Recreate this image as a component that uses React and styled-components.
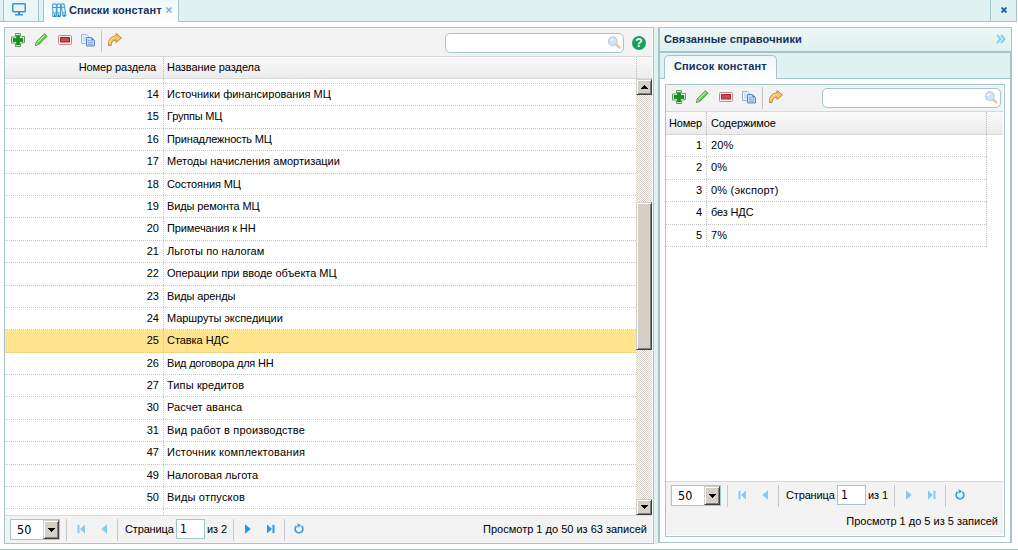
import React from "react";
import styled, { createGlobalStyle, css } from "styled-components";

const LINE = "#a6c5ca";
const DOT = "#c6c6c6";

const GlobalStyle = createGlobalStyle`
  * { box-sizing: border-box; }
  body { margin: 0; background: #fff; overflow: hidden; }
  body, input { font-family: "Liberation Sans", Arial, sans-serif; font-size: 11px; color: #000; }
`;

const Page = styled.div`
  width: 1018px; height: 550px; display: flex; flex-direction: column;
  border-bottom: 1px solid ${LINE};
`;
const TabBar = styled.div`
  width: 1017px; height: 22px; display: flex; background: #dff1f0; padding-left: 3px;
  border-right: 1px solid ${LINE}; box-shadow: inset 0 -1px ${LINE};
`;
const WindowTab = styled.div`
  width: ${(p) => p.$width}px; height: ${(p) => (p.$active ? 22 : 21)}px; display: flex; align-items: center;
  margin-right: ${(p) => (p.$active ? 0 : 4)}px; padding: 0 6px 2px 8px;
  border: 1px solid ${LINE}; border-width: 0 1px;
  background: ${(p) => (p.$active ? "linear-gradient(#eef8f8, #fff)" : "#e9f6f5")};
`;
const TabTitle = styled.b`
  color: #15305f; letter-spacing: ${(p) => p.$ls || 0}px; margin-left: ${(p) => p.$indent || 0}px;
  white-space: nowrap; line-height: 14px;
`;
const TabClose = styled.span`display: flex; margin-left: 4px;`;
const CloseAll = styled.div`
  margin-left: auto; width: 26px; height: 21px; border-left: 1px solid ${LINE};
  display: flex; align-items: center; justify-content: center; padding-bottom: 1px;
`;
const Workspace = styled.div`display: flex; height: 517px; margin: 5px 0 0 4px;`;

const GridPanel = styled.section`
  width: ${(p) => p.$width}px; height: ${(p) => p.$height}px; display: flex; flex-direction: column;
  border: 1px solid ${LINE}; padding-right: 1px; background: #fff;
  ${(p) => p.$inset && css`margin: 5px 0 0 5px; padding-bottom: 1px;`}
`;
const Splitter = styled.div`width: 4px; background: #e0f3f1;`;
const Toolbar = styled.div`
  height: ${(p) => p.$height}px; display: flex; align-items: flex-start; background: #f3f3f3;
  padding: ${(p) => p.$top}px ${(p) => p.$right}px 0 5px; border-bottom: 1px solid #d9d9d9;
`;
const ToolButton = styled.span`width: 16px; height: 16px; margin-right: 7.3px; display: flex; svg { display: block; }`;
const ToolDivider = styled.span`width: 1px; height: 22px; margin: -2px 5px 0 -2px; background: #c4c4c4;`;
const SearchBox = styled.label`
  margin: ${(p) => p.$top}px 0 0 auto; width: 179px; height: 20px; padding: 0 2px 0 4px; display: flex; align-items: center;
  border: 1px solid ${LINE}; border-radius: 5px; background: #fff;
`;
const SearchInput = styled.input`flex: 1; min-width: 0; border: 0; outline: 0; background: none;`;
const HelpButton = styled.span`
  width: 14px; height: 14px; margin: 4px 1px 0 8px; border-radius: 50%; background: #1c9f58;
  color: #fff; font: bold 12px/14px "Liberation Sans", sans-serif; text-align: center;
`;
const HeaderRow = styled.div`
  height: ${(p) => p.$height}px; display: flex; align-items: stretch; border-bottom: 1px solid #d9d9d9;
  background: linear-gradient(#fafafa, #ececec); line-height: ${(p) => p.$height - 1}px;
`;
const HeaderCell = styled.div`
  width: ${(p) => p.$width}px; padding: 0 ${(p) => p.$pad || 3}px; border-right: 1px dotted #bbb;
  text-align: ${(p) => (p.$right ? "right" : "left")}; white-space: nowrap; letter-spacing: ${(p) => p.$ls || 0}px;
`;
const GridBody = styled.div`flex: 1; min-height: 0; display: flex; overflow: hidden;`;
const Rows = styled.div`width: ${(p) => p.$width}px;`;
const Row = styled.div`
  height: ${(p) => p.$height || 22.4}px; display: flex; border-bottom: 1px dotted ${DOT};
  background: ${(p) => (p.$selected ? "#ffe48d" : "transparent")};
`;
const Cell = styled.div`
  width: ${(p) => p.$width}px; padding: 0 ${(p) => (p.$right ? 4 : 3)}px; line-height: 21px; white-space: nowrap;
  border-right: ${(p) => (p.$line ? `1px dotted ${DOT}` : "0")};
  text-align: ${(p) => (p.$right ? "right" : "left")}; letter-spacing: ${(p) => p.$ls || 0}px;
`;
const ValueCell = styled(Cell)`padding-left: 4px;`;
const ScrollTrack = styled.div`
  width: 16px; display: flex; flex-direction: column;
  background: repeating-conic-gradient(#d4d0c8 0 25%, #fff 0 50%) 0 0 / 2px 2px;
`;
const raised = css`
  background: #d4d0c8; border: 1px solid; border-color: #d4d0c8 #404040 #404040 #d4d0c8;
  box-shadow: inset 1px 1px #fff, inset -1px -1px #808080;
`;
const ScrollArrow = styled.div`
  height: 16px; flex: none; display: flex; align-items: center; justify-content: center; ${raised}
  ${(p) => p.$end && css`margin-top: auto;`}
`;
const ScrollThumb = styled.div`height: 148px; margin-top: 107px; ${raised}`;
const Footer = styled.div`
  height: ${(p) => p.$height}px; display: flex; align-items: flex-start; padding: 3px 5px 0;
  background: #f3f3f3; border-top: 1px solid #d9d9d9; flex-wrap: ${(p) => (p.$wrap ? "wrap" : "nowrap")};
  line-height: 20px; white-space: nowrap;
`;
const Select = styled.div`
  width: 50px; height: 21px; display: flex; justify-content: space-between; border: 1px solid ${LINE}; background: #fff;
  padding-left: 6px; font: 12.500px/19px "DejaVu Sans Condensed", "DejaVu Sans", sans-serif;
`;
const SelectArrow = styled.span`width: 16px; height: 19px; display: flex; align-items: center; justify-content: center; ${raised}`;
const PagerDivider = styled.span`width: 1px; height: 22px; background: #c9c9c9; margin: 0 ${(p) => p.$after}px 0 ${(p) => p.$before}px;`;
const PagerButton = styled.span`width: 16px; height: 20px; display: flex; align-items: center; justify-content: center; margin-right: ${(p) => p.$gap || 0}px;`;
const PageInput = styled.input`
  width: 29px; height: 20px; margin: 0 2px; padding: 0 3px; border: 1px solid ${LINE}; outline: 0;
  font: 12px "DejaVu Sans Condensed", "DejaVu Sans", sans-serif;
`;
const FooterText = styled.span`
  letter-spacing: ${(p) => p.$ls || 0}px; width: ${(p) => (p.$width ? `${p.$width}px` : "auto")};
`;
const Summary = styled.span`margin-left: auto; letter-spacing: ${(p) => p.$ls || 0}px;`;

const SidePanel = styled.section`
  width: 354px; height: 516px; border: 1px solid ${LINE}; border-left-width: 2px; display: flex; flex-direction: column;
`;
const SideHeader = styled.header`
  height: 25px; flex: none; display: flex; align-items: center; justify-content: space-between; padding: 0 5px 1px 4px;
  background: linear-gradient(#edf7f7, #dff1f0); border-bottom: 2px solid ${LINE};
`;
const SideBody = styled.div`flex: 1; border-right: 1px solid ${LINE};`;
const SideTabs = styled.div`
  height: 26px; background: #dff1f0; box-shadow: inset 0 -1px ${LINE}; padding: 2px 0 0 4px;
`;
const SideTab = styled.div`
  width: 113px; height: 24px; padding: 3px 9px; border: 1px solid ${LINE}; border-bottom: 0; border-radius: 5px 5px 0 0;
  background: linear-gradient(#eef8f8, #fff);
`;

const AddIcon = () => (
  <svg width="16" height="16" viewBox="0 0 16 16">
    <path d="M5.500 1.500h5v2.500l1 .5h3v6l-3 .5-1 1v2.500h-5V12l-1-1H1.500V5h3l1-1z" fill="#fff" stroke="#5b9c61" />
    <path d="M6.300 3.200h3.400v3.100H13v3.400H9.700V13H6.300V9.700H3V6.300h3.300z" fill="#149222" stroke="#0d7617" strokeWidth=".5" />
  </svg>
);
const PencilIcon = () => (
  <svg width="16" height="16" viewBox="0 0 16 16">
    <path d="M2.300 13.500l1.300-4L11.500 1.700l2.500 2.500-7.800 8z" fill="#5fca45" stroke="#379c2d" strokeWidth=".9" />
    <path d="M4.500 10.200l7.500-7.300" stroke="#b7ee9d" strokeWidth="1.200" />
    <path d="M3.500 9.800l2.600 2.400-3.900 1.400z" fill="#c9d9a0" stroke="#5a8a45" strokeWidth=".5" />
  </svg>
);
const DeleteIcon = () => (
  <svg width="16" height="16" viewBox="0 0 16 16">
    <rect x="1.500" y="3.500" width="13" height="9" rx="1" fill="#fbf1f1" stroke="#c08a8c" />
    <rect x="3.500" y="5.500" width="9" height="4.500" fill="#c84b51" stroke="#a7252e" />
  </svg>
);
const CopyIcon = () => (
  <svg width="16" height="16" viewBox="0 0 16 16">
    <path d="M1.500 2.500h5l2.500 2.500v6.500H1.500z" fill="#edf3fc" stroke="#9cb5de" />
    <path d="M3 5h3M3 7h3M3 9h3" stroke="#b5caea" />
    <path d="M6.500 5.500h5l3 3v5.500h-8z" fill="#c4d8f5" stroke="#6388cc" />
    <path d="M11.500 5.500v3h3z" fill="#4f7cc8" />
    <path d="M8 8.500h2.500M8 10.500h5M8 12.500h5" fill="none" stroke="#86a9de" />
  </svg>
);
const ForwardIcon = () => (
  <svg width="16" height="16" viewBox="0 0 16 16">
    <path d="M9 1.500l5.500 4.500L9 10.500V8C6 8 4.500 9.800 4 13.500H1.500C1 7.500 4 4.200 9 4z" fill="#fac266" stroke="#bd8541" strokeLinejoin="round" />
    <path d="M2.500 11C3 7 5.500 5.200 9.500 5" fill="none" stroke="#ffe2a1" />
  </svg>
);
const SearchIcon = () => (
  <svg width="14" height="14" viewBox="0 0 14 14">
    <path d="M9 8.500l3.500 3" stroke="#ebbc86" strokeWidth="2.200" strokeLinecap="round" />
    <circle cx="5.800" cy="5.300" r="4.300" fill="#cce5fa" stroke="#c6cedb" strokeWidth="1.300" />
    <path d="M3.500 5a2.500 2.500 0 0 1 3-2" stroke="#f5fbff" fill="none" strokeWidth="1.400" />
  </svg>
);
const MonitorIcon = () => (
  <svg width="14" height="13" viewBox="0 0 14 13">
    <rect x=".75" y=".75" width="12.500" height="8" rx=".7" fill="#e5f4fd" stroke="#3f91c8" strokeWidth="1.500" />
    <path d="M6 9h2v2h3v1.500H3V11h3z" fill="#3f91c8" />
  </svg>
);
const BindersIcon = () => (
  <svg width="15" height="15" viewBox="0 0 15 15">
    <path d="M.8 1h3.500v12.500H.8zM5 1h3.500v12.500H5zM9 1.300l3-.5 2 12-3 .5z" fill="#f0f9fe" stroke="#3996cc" />
    <path d="M1 4.500h3M5.200 4.500h3M9.500 4.500l3-.5M1 10h3M5.200 10h3M10.500 10l3-.5" stroke="#3996cc" />
    <path d="M2 12.500h1.500M6 12.500h1.500M11.500 12.500H13" stroke="#1679b7" strokeWidth="2" />
  </svg>
);
const CrossIcon = ({ color, width = 1.2 }) => (
  <svg width="6" height="6" viewBox="0 0 6 6"><path d="M.5.5l5 5M5.500.5l-5 5" stroke={color} strokeWidth={width} /></svg>
);
const ChevronsIcon = () => (
  <svg width="10" height="10" viewBox="0 0 10 10"><path d="M1 1l3.500 4L1 9M5 1l3.500 4L5 9" fill="none" stroke="#8bcaf1" strokeWidth="1.900" /></svg>
);
const Triangle = ({ up }) => (
  <svg width="7" height="4" viewBox="0 0 7 4" shapeRendering="crispEdges">
    <path d={up ? "M3 0h1v1h1v1h1v1h1v1H0V3h1V2h1V1h1z" : "M0 0h7v1H6v1H5v1H4v1H3V3H2V2H1V1H0z"} />
  </svg>
);
const PageIcon = ({ kind, off }) => {
  const flip = kind === "first" || kind === "prev";
  const bar = kind === "first" || kind === "last";
  return (
    <svg width="10" height="10" viewBox="0 0 10 10">
      <g fill={off ? "#87c9f3" : "#1b9bed"} transform={flip ? "translate(10 0) scale(-1 1)" : undefined}>
        <path d={bar ? "M1 .5l5 4.500-5 4.500z" : "M2 .3l5.700 4.700L2 9.700z"} />
        {bar && <path d="M6.500 .8h2v8.400h-2z" />}
      </g>
    </svg>
  );
};
const RefreshIcon = () => (
  <svg width="12" height="12" viewBox="0 0 12 12">
    <path d="M3.500 3A3.900 3.900 0 1 0 8.500 3" fill="none" stroke="#3da0e4" strokeWidth="1.700" />
    <path d="M4.500.3l3.700 2-3.500 2.500z" fill="#3da0e4" />
  </svg>
);

const Tools = () => (
  <>
    <ToolButton><AddIcon /></ToolButton>
    <ToolButton><PencilIcon /></ToolButton>
    <ToolButton><DeleteIcon /></ToolButton>
    <ToolButton><CopyIcon /></ToolButton>
    <ToolDivider />
    <ToolButton><ForwardIcon /></ToolButton>
  </>
);
const Search = ({ top }) => (
  <SearchBox $top={top}><SearchInput aria-label="Поиск" /><SearchIcon /></SearchBox>
);
const Pager = ({ pages, nextOff }) => (
  <>
    <Select>50<SelectArrow><Triangle /></SelectArrow></Select>
    <PagerDivider $before={6} $after={6} />
    <PagerButton $gap={7}><PageIcon kind="first" off /></PagerButton>
    <PagerButton><PageIcon kind="prev" off /></PagerButton>
    <PagerDivider $before={5} $after={7} />
    <FooterText $width={49} $ls={-0.15}>Страница</FooterText>
    <PageInput defaultValue="1" aria-label="Страница" />
    <FooterText $width={22} $ls={-0.1}>из {pages}</FooterText>
    <PagerDivider $before={4} $after={6} />
    <PagerButton $gap={7}><PageIcon kind="next" off={nextOff} /></PagerButton>
    <PagerButton><PageIcon kind="last" off={nextOff} /></PagerButton>
    <PagerDivider $before={5} $after={6} />
    <PagerButton><RefreshIcon /></PagerButton>
  </>
);

// id, name, letter tracking in px
const sections = [
  [14, "Источники финансирования МЦ", 0], [15, "Группы МЦ", -0.2], [16, "Принадлежность МЦ", -0.15],
  [17, "Методы начисления амортизации", 0], [18, "Состояния МЦ", -0.1], [19, "Виды ремонта МЦ", -0.12],
  [20, "Примечания к НН", -0.12], [21, "Льготы по налогам", 0.08], [22, "Операции при вводе объекта МЦ", -0.02],
  [23, "Виды аренды", -0.12], [24, "Маршруты экспедиции", -0.06], [25, "Ставка НДС", -0.05],
  [26, "Вид договора для НН", -0.2], [27, "Типы кредитов", 0.12], [30, "Расчет аванса", 0.12],
  [31, "Вид работ в производстве", 0.16], [47, "Источник комплектования", 0.22],
  [49, "Налоговая льгота", 0.06], [50, "Виды отпусков", 0.2],
];
const constants = [["20%", 0.15], ["0%", 0.1], ["0% (экспорт)", 0.2], ["без НДС", -0.15], ["7%", 0.1]];

export default function App() {
  return (
    <Page>
      <GlobalStyle />
      <TabBar>
        <WindowTab $width={36}><MonitorIcon /></WindowTab>
        <WindowTab $width={136} $active>
          <BindersIcon />
          <TabTitle $ls={0.1} $indent={2}>Списки констант</TabTitle>
          <TabClose><CrossIcon color="#6fa6d2" /></TabClose>
        </WindowTab>
        <CloseAll><CrossIcon color="#1560a8" width={1.8} /></CloseAll>
      </TabBar>
      <Workspace>
        <GridPanel $width={650} $height={517}>
          <Toolbar $height={29} $top={4} $right={5}><Tools /><Search top={1} /><HelpButton>?</HelpButton></Toolbar>
          <HeaderRow $height={22}>
            <HeaderCell $width={159} $right $pad={7} $ls={-0.1}>Номер раздела</HeaderCell>
            <HeaderCell $width={473} $ls={-0.05}>Название раздела</HeaderCell>
          </HeaderRow>
          <GridBody>
            <Rows $width={631}>
              <Row $height={5}><Cell $width={159} $line /></Row>
              {sections.map(([id, name, tracking]) => (
                <Row key={id} $selected={id === 25}>
                  <Cell $width={159} $right $line>{id}</Cell>
                  <Cell $ls={tracking}>{name}</Cell>
                </Row>
              ))}
              <Row><Cell $width={159} $line /></Row>
            </Rows>
            <ScrollTrack>
              <ScrollArrow><Triangle up /></ScrollArrow>
              <ScrollThumb />
              <ScrollArrow $end><Triangle /></ScrollArrow>
            </ScrollTrack>
          </GridBody>
          <Footer $height={28}>
            <Pager pages={2} />
            <Summary>Просмотр 1 до 50 из 63 записей</Summary>
          </Footer>
        </GridPanel>
        <Splitter />
        <SidePanel>
          <SideHeader><TabTitle $ls={0.14}>Связанные справочники</TabTitle><ChevronsIcon /></SideHeader>
          <SideBody>
            <SideTabs><SideTab><TabTitle $ls={0.1}>Список констант</TabTitle></SideTab></SideTabs>
            <GridPanel $width={340} $height={453} $inset>
              <Toolbar $height={27} $top={4} $right={2}><Tools /><Search top={-1} /></Toolbar>
              <HeaderRow $height={23}>
                <HeaderCell $width={41} $ls={-0.2}>Номер</HeaderCell>
                <HeaderCell $width={280} $pad={4} $ls={-0.1}>Содержимое</HeaderCell>
              </HeaderRow>
              <GridBody>
                <Rows $width={321}>
                  {constants.map(([name, tracking], i) => (
                    <Row key={name}>
                      <Cell $width={41} $right $line>{i + 1}</Cell>
                      <ValueCell $width={280} $line $ls={tracking}>{name}</ValueCell>
                    </Row>
                  ))}
                </Rows>
              </GridBody>
              <Footer $height={54} $wrap>
                <Pager pages={1} nextOff />
                <Summary>Просмотр 1 до 5 из 5 записей</Summary>
              </Footer>
            </GridPanel>
          </SideBody>
        </SidePanel>
      </Workspace>
    </Page>
  );
}
